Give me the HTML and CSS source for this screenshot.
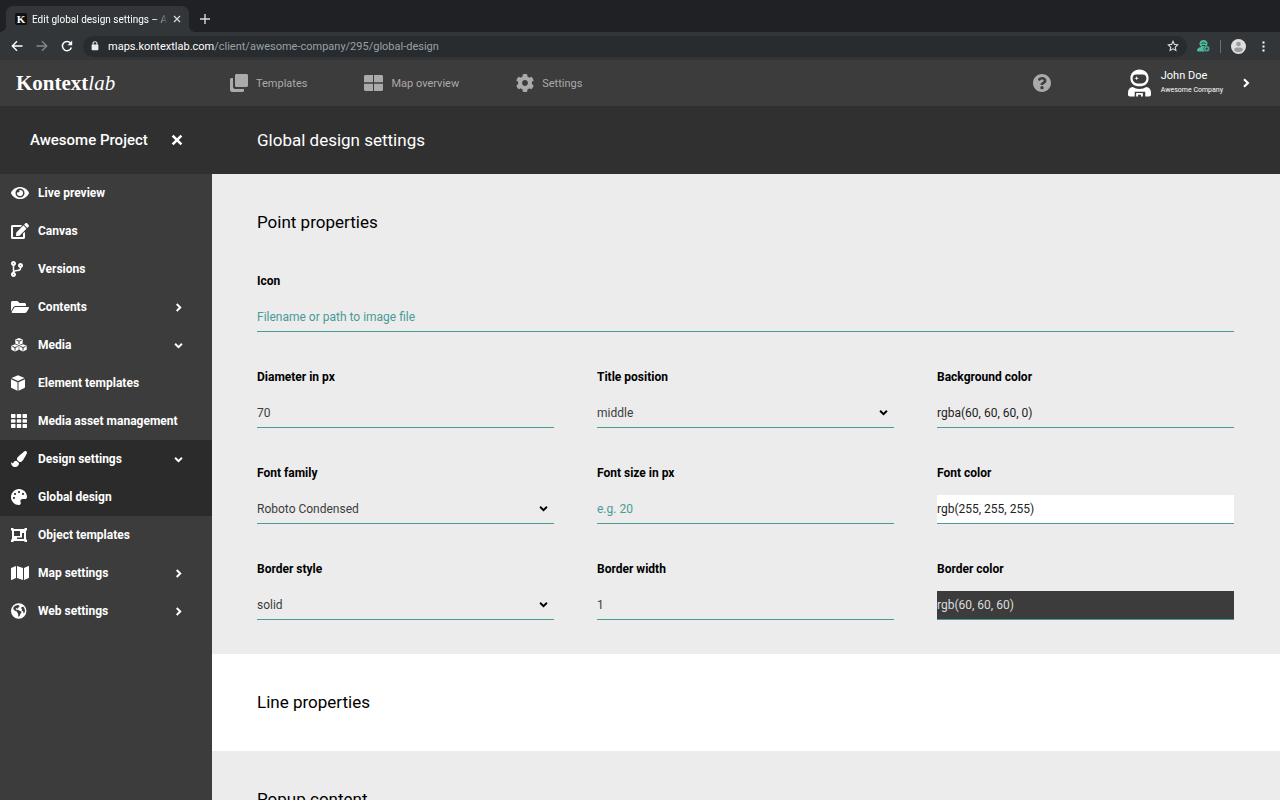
FILE: index.html
```html
<!DOCTYPE html>
<html lang="en">

<head>
  <meta charset="UTF-8">
  <meta name="viewport" content="width=device-width, initial-scale=1.0">
  <title>Edit global design settings – Awesome Project</title>
  <link rel="stylesheet" href="styles.css">
</head>

<body>
  <!-- Shared icons -->
  <svg class="sprite" aria-hidden="true">
    <symbol id="chevron-right" viewBox="0 0 10 10">
      <path d="M3 1.2 6.9 5 3 8.8" fill="none" stroke="currentColor" stroke-width="2.2" />
    </symbol>
    <symbol id="chevron-down" viewBox="0 0 10 10">
      <path d="M1.2 3 5 6.8 8.8 3" fill="none" stroke="currentColor" stroke-width="2.2" />
    </symbol>
    <symbol id="close" viewBox="0 0 12 12">
      <path d="M1.6 1.6l8.8 8.8M10.4 1.6l-8.8 8.8" fill="none" stroke="currentColor" stroke-width="2.6" />
    </symbol>
  </svg>

  <!-- Browser window -->
  <div class="tab-strip">
    <div class="tab">
      <span class="favicon">K</span>
      <span class="tab-title">Edit global design settings – Awesome Project</span>
      <button type="button" aria-label="Close tab">
        <svg width="8" height="8" viewBox="0 0 8 8"><path d="M1 1l6 6M7 1l-6 6" fill="none" stroke="#dadce0" stroke-width="1.2" /></svg>
      </button>
    </div>
    <button type="button" aria-label="New tab">
      <svg width="10" height="10" viewBox="0 0 10 10"><path d="M5 0v10M0 5h10" fill="none" stroke="#dadce0" stroke-width="1.4" /></svg>
    </button>
  </div>
  <div class="toolbar">
    <div class="toolbar-nav">
      <button type="button" aria-label="Back">
        <svg width="12" height="12" viewBox="0 0 12 12"><path d="M11.5 6H1.5M6 1.3 1.3 6 6 10.7" fill="none" stroke="#fff" stroke-width="1.4" /></svg>
      </button>
      <button type="button" aria-label="Forward">
        <svg width="12" height="12" viewBox="0 0 12 12"><path d="M.5 6h10M6 1.3 10.7 6 6 10.7" fill="none" stroke="#83868a" stroke-width="1.4" /></svg>
      </button>
      <button type="button" aria-label="Reload">
        <svg width="12" height="12" viewBox="0 0 12 12"><path d="M10.4 7.6A4.6 4.6 0 1 1 9.6 3.1" fill="none" stroke="#fff" stroke-width="1.5" /><path d="M11.2.6v4.7H6.5z" fill="#fff" /></svg>
      </button>
    </div>
    <div class="address">
      <svg width="8" height="10" viewBox="0 0 8 10"><path d="M2 4V2.8a2 2 0 0 1 4 0V4" fill="none" stroke="#e8eaed" stroke-width="1.1" /><rect x=".6" y="3.6" width="6.8" height="5.6" rx=".8" fill="#e8eaed" /></svg>
      <span class="url"><b>maps.kontextlab.com</b>/client/awesome-company/295/global-design</span>
      <svg width="12" height="12" viewBox="0 0 12 12"><path d="M6 1.3l1.4 3.1 3.3.4-2.4 2.3.6 3.4L6 8.8l-2.9 1.7.6-3.4L1.3 4.8l3.3-.4z" fill="none" stroke="#dadce0" stroke-width="1.1" /></svg>
    </div>
    <svg width="13" height="12" viewBox="0 0 13 12">
      <path d="M6.5 0c2.4 0 4 1.5 4 3.6 0 .8-.2 1.4-.6 2L8.600 7H4.400L3 5.400c-.3-.6-.5-1.100-.5-1.800C2.500 1.500 4.100 0 6.500 0z" fill="#4dbb9f" />
      <path d="M0 10.600C0 8.200 2 7 4.500 7h4L8 11.500H1.500C.6 11.500 0 11.200 0 10.600z" fill="#4dbb9f" />
      <path d="M4.300 3.900c.3-1.500 4-1.500 4.400 0M5 5.500h3" fill="none" stroke="#32363a" />
      <circle cx="9.800" cy="8.800" r="3" fill="#4dbb9f" stroke="#32363a" stroke-width=".6" />
      <path d="M9.800 7.200v3.200M8.200 8.800h3.200" stroke="#32363a" stroke-width=".9" />
    </svg>
    <span class="divider"></span>
    <svg width="15" height="15" viewBox="0 0 15 15"><circle cx="7.500" cy="7.500" r="7.500" fill="#dedfe1" /><circle cx="7.500" cy="5" r="2.300" fill="#9b9b9d" /><path d="M3 11.300C3 9 5 8.600 7.500 8.600S12 9 12 11.300c-1.200 1.300-2.700 2-4.500 2s-3.300-.7-4.500-2z" fill="#9b9b9d" /></svg>
    <svg width="3" height="11" viewBox="0 0 3 11" class="menu-dots"><path d="M.5.5h2v2h-2zM.5 4.500h2v2h-2zM.5 8.500h2v2h-2z" fill="#fff" /></svg>
  </div>

  <!-- App header -->
  <header class="header">
    <a href="#" class="logo">Kontext<i>lab</i></a>
    <nav class="main-nav">
      <a href="#">
        <svg width="18" height="18" viewBox="0 0 18 18"><path d="M6 0h11l1 1v11l-1 1H6l-1-1V1zM0 5l1-1h2v9.500L4.500 15H14v2l-1 1H1.500L0 16.500z" /></svg>
        Templates
      </a>
      <a href="#">
        <svg width="19" height="16" viewBox="0 0 19 16"><path d="M1 0h8v7.300H0V1zM10 0h8l1 1v6.300h-9zM0 8.700h9V16H1l-1-1zM10 8.700h9V15l-1 1h-8z" /></svg>
        Map overview
      </a>
      <a href="#">
        <svg width="18" height="18" viewBox="8 8 496 496"><path d="M487.400 315.700l-42.600-24.600c4.300-23.200 4.300-47 0-70.200l42.600-24.600c4.900-2.800 7.100-8.600 5.500-14-11.100-35.600-30-67.800-54.700-94.600-3.800-4.100-10-5.100-14.800-2.300L380.800 110c-17.900-15.400-38.500-27.300-60.800-35.100V25.800c0-5.600-3.900-10.500-9.400-11.700-36.700-8.200-74.300-7.800-109.200 0-5.500 1.200-9.400 6.100-9.400 11.700V75c-22.200 7.900-42.800 19.800-60.800 35.100L88.700 85.500c-4.900-2.800-11-1.900-14.800 2.300-24.700 26.700-43.600 58.900-54.700 94.600-1.700 5.400.6 11.200 5.500 14L67.300 221c-4.300 23.200-4.300 47 0 70.200l-42.600 24.600c-4.900 2.800-7.100 8.600-5.500 14 11.100 35.600 30 67.800 54.700 94.600 3.800 4.100 10 5.100 14.800 2.300l42.600-24.600c17.900 15.400 38.500 27.300 60.800 35.100v49.200c0 5.600 3.900 10.500 9.400 11.700 36.700 8.200 74.300 7.800 109.200 0 5.500-1.200 9.400-6.100 9.400-11.700v-49.200c22.200-7.900 42.800-19.800 60.800-35.100l42.600 24.600c4.900 2.800 11 1.900 14.800-2.300 24.700-26.700 43.600-58.900 54.700-94.600 1.500-5.500-.7-11.300-5.600-14.100zM256 336c-44.100 0-80-35.900-80-80s35.900-80 80-80 80 35.900 80 80-35.900 80-80 80z" /></svg>
        Settings
      </a>
    </nav>
    <button type="button" class="help" aria-label="Help">
      <svg width="18" height="18" viewBox="8 8 496 496"><path d="M504 256c0 136.997-111.043 248-248 248S8 392.997 8 256C8 119.083 119.043 8 256 8s248 111.083 248 248zM262.655 90c-54.497 0-89.255 22.957-116.549 63.758-3.536 5.286-2.353 12.415 2.715 16.258l34.699 26.310c5.205 3.947 12.621 3.008 16.665-2.122 17.864-22.658 30.113-35.797 57.303-35.797 20.429 0 45.698 13.148 45.698 32.958 0 14.976-12.363 22.667-32.534 33.976C247.128 238.528 216 254.941 216 296v4c0 6.627 5.373 12 12 12h56c6.627 0 12-5.373 12-12v-1.333c0-28.462 83.186-29.647 83.186-106.667 0-58.002-60.165-102-116.531-102zM256 338c-25.365 0-46 20.635-46 46 0 25.364 20.635 46 46 46s46-20.636 46-46c0-25.364-20.635-46-46-46z" /></svg>
    </button>
    <button type="button" class="user">
      <svg width="23" height="28" viewBox="0 0 24 28">
        <path fill="#fff" fill-rule="evenodd" d="M12 0c5.600 0 9.500 3.800 9.500 9s-3.900 8.500-9.500 8.500S2.500 14.200 2.500 9 6.400 0 12 0zM8.500 5C6 5 4.800 6.600 4.800 9s1.200 4.500 3.700 5.200c2 .6 5 .6 7 0 2.500-.7 3.700-2.800 3.700-5.200S18 5 15.500 5z" />
        <path fill="#fff" d="M9 7l.7 1.400 1.800.6-1.800.6L9 11l-.7-1.400L6.500 9l1.800-.6z" />
        <path fill="#fff" fill-rule="evenodd" d="M5 18.200c2 1.400 4.300 2 7 2s5-.6 7-2c3.200.4 5 2.700 5 6V26c0 1.300-.6 2-2 2h-4v-5H7v5H2c-1.400 0-2-.7-2-2v-1.800c0-3.300 1.800-5.600 5-6zM8.500 28v-3.500h7V28h-2v-1.700h-3V28z" />
      </svg>
      <span class="user-name">John Doe<small>Awesome Company</small></span>
      <svg width="10" height="10" class="chevron"><use href="#chevron-right" /></svg>
    </button>
  </header>

  <div class="title-bar">
    <div class="project">
      Awesome Project
      <button type="button" aria-label="Close project"><svg width="12" height="12"><use href="#close" /></svg></button>
    </div>
    <h1>Global design settings</h1>
  </div>

  <div class="page">
    <nav class="sidebar">
      <a href="#">
        <svg width="18" height="16" viewBox="0 0 576 512"><path d="M572.520 241.400C518.290 135.590 410.930 64 288 64S57.680 135.640 3.480 241.410a32.350 32.350 0 0 0 0 29.190C57.710 376.410 165.070 448 288 448s230.320-71.640 284.520-177.410a32.350 32.350 0 0 0 0-29.190zM288 400a144 144 0 1 1 144-144 143.930 143.930 0 0 1-144 144zm0-240a95.310 95.310 0 0 0-25.310 3.790 47.850 47.850 0 0 1-66.900 66.900A95.780 95.780 0 1 0 288 160z" /></svg>
        Live preview
      </a>
      <a href="#">
        <svg width="18" height="16" viewBox="0 0 576 512"><path d="M402.600 83.200l90.200 90.200c3.800 3.800 3.800 10 0 13.800L274.400 405.600l-92.800 10.300c-12.400 1.400-22.900-9.100-21.500-21.500l10.300-92.800L388.800 83.200c3.800-3.800 10-3.800 13.800 0zm162-22.900l-48.800-48.800c-15.200-15.200-39.900-15.200-55.200 0l-35.400 35.400c-3.800 3.800-3.800 10 0 13.800l90.200 90.200c3.800 3.800 10 3.800 13.800 0l35.400-35.400c15.200-15.300 15.200-40 0-55.200zM384 346.200V448H64V128h229.800c3.200 0 6.200-1.300 8.500-3.500l40-40c7.600-7.600 2.200-20.500-8.500-20.500H48C21.500 64 0 85.500 0 112v352c0 26.500 21.500 48 48 48h352c26.500 0 48-21.500 48-48V306.200c0-10.700-12.900-16-20.500-8.500l-40 40c-2.200 2.300-3.500 5.300-3.500 8.500z" /></svg>
        Canvas
      </a>
      <a href="#">
        <svg width="18" height="16" viewBox="0 0 576 512"><path d="M384 144c0-44.200-35.800-80-80-80s-80 35.800-80 80c0 36.400 24.300 67.100 57.500 76.800-.6 16.100-4.200 28.500-11 36.900-15.400 19.200-49.300 22.400-85.200 25.700-28.200 2.600-57.400 5.400-81.300 16.900v-144c32.500-10.200 56-40.500 56-76.300 0-44.200-35.800-80-80-80S0 35.800 0 80c0 35.800 23.500 66.100 56 76.300v199.300C23.500 365.900 0 396.200 0 432c0 44.200 35.800 80 80 80s80-35.800 80-80c0-34-21.200-63.100-51.200-74.600 3.100-5.200 7.800-9.800 14.900-13.400 16.200-8.200 40.400-10.400 66.100-12.800 42.200-3.900 90-8.400 118.200-43.400 14-17.400 21.100-39.800 21.600-67.900 31.600-10.800 54.400-40.700 54.400-75.900zM80 64c8.800 0 16 7.200 16 16s-7.200 16-16 16-16-7.200-16-16 7.200-16 16-16zm0 384c-8.800 0-16-7.200-16-16s7.200-16 16-16 16 7.200 16 16-7.200 16-16 16zm224-320c8.800 0 16 7.200 16 16s-7.200 16-16 16-16-7.200-16-16 7.200-16 16-16z" /></svg>
        Versions
      </a>
      <a href="#">
        <svg width="18" height="16" viewBox="0 0 576 512"><path d="M572.694 292.093L500.270 416.248A63.997 63.997 0 0 1 444.989 448H45.025c-18.523 0-30.064-20.093-20.731-36.093l72.424-124.155A64 64 0 0 1 152 256h399.964c18.523 0 30.064 20.093 20.730 36.093zM152 224h328v-48c0-26.510-21.490-48-48-48H272l-64-64H48C21.490 64 0 85.490 0 112v278.046l69.077-118.418C86.214 242.250 117.989 224 152 224z" /></svg>
        Contents
        <svg width="9" height="9" class="chevron"><use href="#chevron-right" /></svg>
      </a>
      <a href="#">
        <svg width="18" height="16" viewBox="0 0 18 16">
          <path d="M8 1l3.700 1.500v4L8 8.200 4.300 6.500v-4zM4 7.300l3.700 1.500v4L4 14.500.3 12.800v-4zM12 7.300l3.700 1.500v4L12 14.500l-3.700-1.700v-4z" />
          <path d="M5.400 3.200L8 4.200l2.600-1M8 4.200v3M1.400 9.500L4 10.500l2.600-1M4 10.500v3M9.400 9.500l2.600 1 2.600-1M12 10.500v3" class="cut" />
        </svg>
        Media
        <svg width="9" height="9" class="chevron"><use href="#chevron-down" /></svg>
      </a>
      <a href="#">
        <svg width="18" height="16" viewBox="0 0 18 16"><path d="M7 .2l6.500 2.900L7 6.100.5 3.100zM0 4.200l6.500 3v8.600L.6 13A1 1 0 0 1 0 12zM14 4.200l-6.500 3v8.600l5.900-2.800a1 1 0 0 0 .6-1z" /></svg>
        Element templates
      </a>
      <a href="#">
        <svg width="18" height="16" viewBox="0 0 18 16">
          <path d="M.5 1H4l.5.5v3L4 5H.5L0 4.500v-3zM6.300 1h3.400l.5.5v3l-.5.5H6.300l-.5-.5v-3zM12 1h3.500l.5.5v3l-.5.5H12l-.5-.5v-3zM.5 6.200H4l.5.5v2.600l-.5.5H.5L0 9.300V6.700zM6.300 6.200h3.400l.5.5v2.600l-.5.5H6.300l-.5-.5V6.700zM12 6.200h3.500l.5.5v2.600l-.5.5H12l-.5-.5V6.700zM.5 11H4l.5.5v3L4 15H.5l-.5-.5v-3zM6.300 11h3.400l.5.5v3l-.5.5H6.300l-.5-.5v-3zM12 11h3.500l.5.5v3l-.5.5H12l-.5-.5v-3z" />
        </svg>
        Media asset management
      </a>
      <a href="#" class="active">
        <svg width="18" height="16" viewBox="0 0 576 512"><path d="M167.020 309.340c-40.120 2.580-76.530 17.860-97.190 72.300-2.350 6.210-8 9.980-14.590 9.980-11.110 0-45.460-27.670-55.250-34.350C0 439.620 37.930 512 128 512c75.860 0 128-43.770 128-120.190 0-3.110-.65-6.080-.97-9.130l-88.010-73.340zM457.890 0c-15.160 0-29.370 6.710-40.210 16.450C213.270 199.050 192 203.340 192 257.090c0 13.700 3.250 26.760 8.730 38.700l63.820 53.180c7.210 1.800 14.640 3.030 22.390 3.030 62.110 0 98.110-45.470 211.160-256.460 7.380-14.350 13.900-29.850 13.900-45.990C512 20.640 486 0 457.890 0z" /></svg>
        Design settings
        <svg width="9" height="9" class="chevron"><use href="#chevron-down" /></svg>
      </a>
      <a href="#" class="active">
        <svg width="18" height="16" viewBox="0 0 576 512"><path d="M204.300 5C104.900 24.400 24.800 104.300 5.200 203.400c-37 187 131.700 326.400 258.800 306.700 41.200-6.400 61.400-54.600 42.500-91.700-23.100-45.400 9.900-98.400 60.900-98.400h79.700c35.800 0 64.800-29.600 64.900-65.300C511.500 97.100 368.100-26.900 204.300 5zM96 320c-17.700 0-32-14.300-32-32s14.300-32 32-32 32 14.300 32 32-14.300 32-32 32zm32-128c-17.700 0-32-14.300-32-32s14.300-32 32-32 32 14.300 32 32-14.300 32-32 32zm128-64c-17.700 0-32-14.300-32-32s14.300-32 32-32 32 14.300 32 32-14.300 32-32 32zm128 64c-17.700 0-32-14.300-32-32s14.300-32 32-32 32 14.300 32 32-14.300 32-32 32z" /></svg>
        Global design
      </a>
      <a href="#">
        <svg width="18" height="16" viewBox="0 0 18 16">
          <path d="M0 1h2.500v1h11V1H16v2.500h-1v9h1V15h-2.500v-1h-11v1H0v-2.500h1v-9H0z" />
          <path d="M3 4h6v5H3zM11 6h2v6H6v-1.500h5z" class="hole" />
        </svg>
        Object templates
      </a>
      <a href="#">
        <svg width="18" height="16" viewBox="0 0 576 512"><path d="M0 117.660v346.320c0 11.320 11.430 19.060 21.940 14.860L160 416V32L20.120 87.950A32.006 32.006 0 0 0 0 117.660zM192 416l192 64V96L192 32v384zM554.060 33.160L416 96v384l139.880-55.950A31.996 31.996 0 0 0 576 394.340V48.020c0-11.320-11.430-19.060-21.940-14.860z" /></svg>
        Map settings
        <svg width="9" height="9" class="chevron"><use href="#chevron-right" /></svg>
      </a>
      <a href="#">
        <svg width="18" height="16" viewBox="0 0 18 16">
          <path fill-rule="evenodd" d="M7.700.3a7.700 7.700 0 1 1 0 15.400A7.700 7.700 0 0 1 7.700.3zM2.300 4.800c0 1.600.7 2.900 2.200 3.300 1.200.3 1.800.6 1.800 1.600l.9 1.100v3c1.200-.3 1.700-1.300 2-2.300.3-1.100 1.200-1.300 1.200-2.500 0-.9-1-1.100-1.900-1.300-1-.3-1.400-1-2.500-.9-.8 0-1.300-.3-1.300-.9 0-.8 1.100-.7 1.700-.2.500-.9 1.700-1.300 2-2.200.2-.8-.5-1.400-1.300-1.600-2 0-3.900 1-4.800 2.900zM10.500 4l-.3 1.500 1 .8-.6 1.200 1.700 1 .2 2 1.300-1.200c.4-2-.2-4.300-1.500-5.500z" />
        </svg>
        Web settings
        <svg width="9" height="9" class="chevron"><use href="#chevron-right" /></svg>
      </a>
    </nav>

    <main class="content">
      <form>
        <section class="panel">
          <h2>Point properties</h2>
          <div class="fields">
            <div class="field wide">
              <label for="icon">Icon</label>
              <input type="text" id="icon" name="icon" placeholder="Filename or path to image file">
            </div>
            <div class="field">
              <label for="diameter">Diameter in px</label>
              <input type="text" id="diameter" name="diameter" value="70">
            </div>
            <div class="field">
              <label for="titlePosition">Title position</label>
              <div class="select">
                <select id="titlePosition" name="titlePosition">
                  <option>top</option>
                  <option selected>middle</option>
                  <option>bottom</option>
                </select>
                <svg width="9" height="9"><use href="#chevron-down" /></svg>
              </div>
            </div>
            <div class="field">
              <label for="backgroundColor">Background color</label>
              <input type="text" id="backgroundColor" name="backgroundColor" class="color" value="rgba(60, 60, 60, 0)">
            </div>
            <div class="field">
              <label for="fontFamily">Font family</label>
              <div class="select">
                <select id="fontFamily" name="fontFamily">
                  <option>Roboto Condensed</option>
                </select>
                <svg width="9" height="9"><use href="#chevron-down" /></svg>
              </div>
            </div>
            <div class="field">
              <label for="fontSize">Font size in px</label>
              <input type="text" id="fontSize" name="fontSize" placeholder="e.g. 20">
            </div>
            <div class="field">
              <label for="fontColor">Font color</label>
              <input type="text" id="fontColor" name="fontColor" class="color color-light" value="rgb(255, 255, 255)">
            </div>
            <div class="field">
              <label for="borderStyle">Border style</label>
              <div class="select">
                <select id="borderStyle" name="borderStyle">
                  <option>solid</option>
                  <option>dashed</option>
                </select>
                <svg width="9" height="9"><use href="#chevron-down" /></svg>
              </div>
            </div>
            <div class="field">
              <label for="borderWidth">Border width</label>
              <input type="text" id="borderWidth" name="borderWidth" value="1">
            </div>
            <div class="field">
              <label for="borderColor">Border color</label>
              <input type="text" id="borderColor" name="borderColor" class="color color-dark" value="rgb(60, 60, 60)">
            </div>
          </div>
        </section>
        <section class="panel">
          <h2>Line properties</h2>
        </section>
        <section class="panel">
          <h2>Popup content</h2>
        </section>
      </form>
    </main>
  </div>
</body>

</html>
```

FILE: styles.css
```css
* {
  box-sizing: border-box;
}

body {
  display: flex;
  flex-direction: column;
  height: 100vh;
  margin: 0;
  background-color: #3c3c3c;
  color: #000;
  font-family: Roboto, Arial, sans-serif;
  font-size: 12px;
}

a {
  color: inherit;
  text-decoration: none;
}

button {
  display: flex;
  align-items: center;
  padding: 0;
  border: none;
  background: none;
  color: inherit;
  font: inherit;
  cursor: pointer;
}

svg {
  flex: none;
  fill: currentColor;
}

.sprite {
  position: absolute;
  width: 0;
  height: 0;
}

/* Browser window */
.tab-strip {
  display: flex;
  flex: none;
  gap: 11px;
  height: 32px;
  padding: 6px 6px 0;
  background-color: #202124;
}

.tab {
  position: relative;
  display: flex;
  align-items: center;
  gap: 5px;
  width: 183px;
  padding: 0 8px 0 9px;
  border-radius: 7px 7px 0 0;
  background-color: #323639;
}

/* Rounded feet of the tab */
.tab::before,
.tab::after {
  content: "";
  position: absolute;
  bottom: 0;
  width: 6px;
  height: 6px;
}

.tab::before {
  right: 100%;
  background: radial-gradient(circle at 0 0, transparent 6px, #323639 6px);
}

.tab::after {
  left: 100%;
  background: radial-gradient(circle at 100% 0, transparent 6px, #323639 6px);
}

.favicon {
  width: 12px;
  border-radius: 2px;
  background-color: #111;
  color: #fff;
  font: bold 11px/12px "Liberation Serif", serif;
  text-align: center;
}

.tab-title {
  flex: 1;
  overflow: hidden;
  color: #fff;
  font-size: 10px;
  white-space: nowrap;
  mask-image: linear-gradient(to right, #000 90%, transparent);
}

.toolbar {
  display: flex;
  flex: none;
  align-items: center;
  gap: 10px;
  height: 28px;
  padding: 0 15px 0 11px;
  background-color: #323639;
}

.toolbar-nav {
  display: flex;
  gap: 13px;
}

.address {
  display: flex;
  flex: 1;
  align-items: center;
  height: 21px;
  padding: 0 8px;
  border-radius: 11px;
  background-color: #282c2f;
  color: #9aa0a6;
  font-size: 11px;
}

.url {
  flex: 1;
  margin-left: 9px;
}

.url b {
  color: #fff;
  font-weight: 400;
}

.divider {
  width: 1px;
  height: 13px;
  background-color: #6b6f73;
}

.menu-dots {
  margin-left: 6px;
}

/* App header */
.header {
  display: flex;
  flex: none;
  align-items: center;
  height: 46px;
  padding: 0 29px 0 16px;
  background-color: #3c3c3c;
  color: #aaa;
  font-size: 11px;
}

.logo {
  width: 214px;
  color: #fff;
  font: bold 21px "Liberation Serif", serif;
}

.logo i {
  font-weight: 400;
}

.main-nav {
  display: flex;
  flex: 1;
  gap: 57px;
}

.main-nav a {
  display: flex;
  align-items: center;
  gap: 8px;
}

.help {
  margin-right: 77px;
}

.user {
  gap: 10px;
  color: #fff;
  text-align: left;
}

.user-name {
  line-height: 15px;
}

.user-name small {
  display: block;
  font-size: 7px;
}

.user .chevron {
  margin-left: 8px;
}

/* Title bar */
.title-bar {
  display: flex;
  flex: none;
  align-items: center;
  height: 68px;
  background-color: #303030;
  color: #fff;
}

.project {
  display: flex;
  align-items: center;
  justify-content: space-between;
  width: 212px;
  padding: 0 29px 0 30px;
  font-size: 15px;
  font-weight: 500;
}

h1,
h2 {
  margin: 0;
  font-size: 17px;
  font-weight: 400;
}

h1 {
  padding-left: 45px;
}

/* Sidebar */
.page {
  display: flex;
  flex: 1;
  min-height: 0;
}

.sidebar {
  flex: none;
  width: 212px;
  background-color: #3c3c3c;
  color: #fff;
  font-weight: 700;
}

.sidebar a {
  display: flex;
  align-items: center;
  gap: 9px;
  height: 38px;
  padding: 0 29px 0 11px;
}

.sidebar .active {
  background-color: #2b2b2b;
}

.sidebar .chevron {
  margin-left: auto;
}

.cut {
  fill: none;
  stroke: #3c3c3c;
}

.hole {
  fill: #3c3c3c;
}

/* Settings form */
.content {
  flex: 1;
  overflow-y: auto;
  scrollbar-width: none;
}

.panel {
  padding: 0 46px 0 45px;
  background-color: #ececec;
}

.panel:nth-child(even) {
  background-color: #fff;
}

.panel h2 {
  line-height: 97px;
}

.fields {
  display: grid;
  grid-template-columns: repeat(3, 1fr);
  gap: 1px 43px;
}

.field {
  padding-bottom: 34px;
}

.wide {
  grid-column: 1 / -1;
}

label {
  display: block;
  margin-bottom: 12px;
  font-weight: 700;
  line-height: 20px;
}

input,
select {
  display: block;
  width: 100%;
  height: 29px;
  padding: 0;
  border: none;
  border-bottom: 1px solid #4a9a98;
  border-radius: 0;
  background-color: transparent;
  color: #3c3c3c;
  font: inherit;
  appearance: none;
}

input::placeholder {
  color: #4a9a98;
  opacity: 1;
}

.select {
  position: relative;
}

.select svg {
  position: absolute;
  top: 9px;
  right: 6px;
  pointer-events: none;
}

.color {
  color: #222;
}

.color-light {
  background-color: #fff;
}

.color-dark {
  background-color: #3c3c3c;
  color: #ddd;
}
```
